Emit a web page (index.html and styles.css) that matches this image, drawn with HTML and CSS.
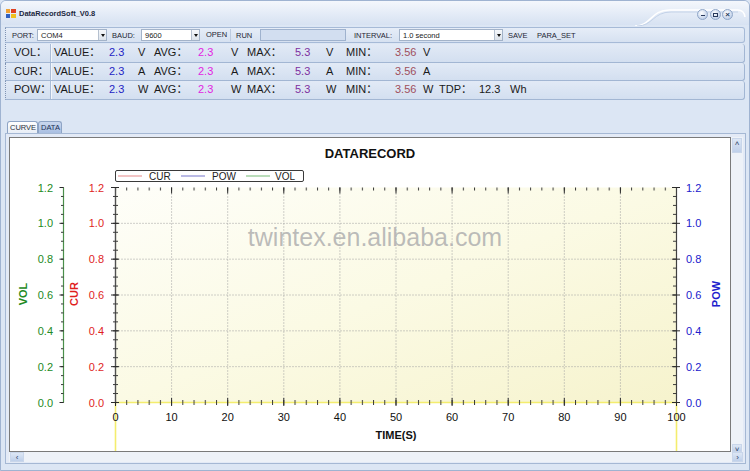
FILE: index.html
```html
<!DOCTYPE html>
<html lang="en">
<head>
  <meta charset="UTF-8">
  <title>DataRecordSoft_V0.8</title>
  <link rel="stylesheet" href="styles.css">
</head>
<body>
  <div class="window">
    <div class="titlebar">
      <svg class="app-icon" width="10" height="9" viewBox="0 0 10 9">
        <rect x="0" y="0" width="4" height="4" fill="#f0a030"/>
        <rect x="5" y="0" width="5" height="4" fill="#e04020"/>
        <rect x="0" y="5" width="4" height="4" fill="#3060c0"/>
        <rect x="5" y="5" width="5" height="4" fill="#f0c020"/>
      </svg>
      <span class="title">DataRecordSoft_V0.8</span>
      <svg class="title-curve" width="120" height="25" viewBox="630 0 120 25">
        <path d="M636 25 C652 25 652 9 670 9 L739 9 Q745 9 746 16" fill="none" stroke="#ffffff" stroke-width="1.5"/>
        <path d="M638 25 C654 25 654 11 672 11 L739 11" fill="none" stroke="#c3d2e8" stroke-width="1"/>
      </svg>
      <div class="controls">
        <span class="ctl"><i class="ico-min"></i></span>
        <span class="ctl"><i class="ico-max"></i></span>
        <span class="ctl"><i class="ico-close">×</i></span>
      </div>
    </div>

    <div class="toolbar">
      <span class="lbl lbl-port">PORT:</span>
      <div class="combo combo-port"><span>COM4</span><i class="arrow"></i></div>
      <span class="lbl lbl-baud">BAUD:</span>
      <div class="combo combo-baud"><span>9600</span><i class="arrow"></i></div>
      <span class="btn btn-open">OPEN</span>
      <span class="btn btn-run">RUN</span>
      <div class="textbox"></div>
      <span class="lbl lbl-interval">INTERVAL:</span>
      <div class="combo combo-interval"><span>1.0 second</span><i class="arrow"></i></div>
      <span class="btn btn-save">SAVE</span>
      <span class="btn">PARA_SET</span>
    </div>

    <div class="rows">
      <div class="row">
        <span class="name">VOL：</span>
        <span class="key first">VALUE：</span><span class="val">2.3</span><span>V</span>
        <span class="key">AVG：</span><span class="avg">2.3</span><span>V</span>
        <span class="key">MAX：</span><span class="max">5.3</span><span>V</span>
        <span class="key">MIN：</span><span class="min">3.56</span><span>V</span>
      </div>
      <div class="row">
        <span class="name">CUR：</span>
        <span class="key first">VALUE：</span><span class="val">2.3</span><span>A</span>
        <span class="key">AVG：</span><span class="avg">2.3</span><span>A</span>
        <span class="key">MAX：</span><span class="max">5.3</span><span>A</span>
        <span class="key">MIN：</span><span class="min">3.56</span><span>A</span>
      </div>
      <div class="row">
        <span class="name">POW：</span>
        <span class="key first">VALUE：</span><span class="val">2.3</span><span>W</span>
        <span class="key">AVG：</span><span class="avg">2.3</span><span>W</span>
        <span class="key">MAX：</span><span class="max">5.3</span><span>W</span>
        <span class="key">MIN：</span><span class="min">3.56</span><span>W</span>
        <span class="key">TDP：</span><span>12.3</span><span>Wh</span>
      </div>
    </div>

    <div class="tabs">
      <span class="tab tab-curve">CURVE</span>
      <span class="tab tab-data active">DATA</span>
    </div>

    <div class="panel">
      <div class="chart-area">
        <svg class="chart" width="722" height="315" viewBox="9 137 722 315">
          <defs>
            <linearGradient id="plotFill" x1="0" y1="0" x2="1" y2="1">
              <stop offset="0" stop-color="#fefef9"/>
              <stop offset="0.5" stop-color="#fbfae4"/>
              <stop offset="1" stop-color="#f6f3cd"/>
            </linearGradient>
            <pattern id="xMinor" x="115" y="0" width="11.22" height="20" patternUnits="userSpaceOnUse">
              <rect width="1" height="20" fill="#3a3a3a"/>
            </pattern>
            <pattern id="yMinor" x="0" y="187" width="20" height="8.958" patternUnits="userSpaceOnUse">
              <rect width="20" height="1" fill="#3a3a3a"/>
            </pattern>
          </defs>

          <rect x="9.5" y="137.5" width="721" height="314" fill="#ffffff" stroke="#7a7a7a"/>
          <text class="c-title" x="370" y="158" text-anchor="middle">DATARECORD</text>

          <!-- legend -->
          <rect x="115.5" y="170.5" width="188" height="11" rx="1.5" fill="#ffffff" stroke="#3a3a3a"/>
          <line x1="118" y1="176" x2="142" y2="176" stroke="#e58a8a" stroke-width="1.2"/>
          <text class="legend" x="149" y="180">CUR</text>
          <line x1="181" y1="176" x2="205" y2="176" stroke="#7777cc" stroke-width="1.2"/>
          <text class="legend" x="212" y="180">POW</text>
          <line x1="246" y1="176" x2="270" y2="176" stroke="#77bb77" stroke-width="1.2"/>
          <text class="legend" x="275" y="180">VOL</text>

          <!-- plot area -->
          <rect x="115.5" y="187.5" width="561" height="215" fill="url(#plotFill)"/>
          <g fill="none" stroke="#a0a0a0" stroke-dasharray="1 2">
            <path d="M171.6 187.5V402.5M227.7 187.5V402.5M283.8 187.5V402.5M339.9 187.5V402.5M396 187.5V402.5M452.1 187.5V402.5M508.2 187.5V402.5M564.3 187.5V402.5M620.4 187.5V402.5"/>
            <path d="M115.5 223.33H676.5M115.5 259.17H676.5M115.5 295H676.5M115.5 330.83H676.5M115.5 366.67H676.5"/>
          </g>

          <text class="watermark" x="375" y="246" text-anchor="middle">twintex.en.alibaba.com</text>

          <!-- x axis -->
          <path d="M115.5 402.5H676.5M115.5 402.5V451M676.5 402.5V451" fill="none" stroke="#f4ed6e" stroke-width="1.6"/>
          <rect x="115" y="400" width="562" height="5" fill="url(#xMinor)"/>
          <rect x="115" y="187.5" width="562" height="3" fill="url(#xMinor)"/>
          <path d="M115.5 398v8M171.6 398v8M227.7 398v8M283.8 398v8M339.9 398v8M396 398v8M452.1 398v8M508.2 398v8M564.3 398v8M620.4 398v8M676.5 398v8" stroke="#2a2a2a"/>
          <path d="M171.6 187.5v6M227.7 187.5v6M283.8 187.5v6M339.9 187.5v6M396 187.5v6M452.1 187.5v6M508.2 187.5v6M564.3 187.5v6M620.4 187.5v6" stroke="#2a2a2a"/>
          <g class="x-lbl" text-anchor="middle">
            <text x="115.5" y="421">0</text>
            <text x="171.6" y="421">10</text>
            <text x="227.7" y="421">20</text>
            <text x="283.8" y="421">30</text>
            <text x="339.9" y="421">40</text>
            <text x="396" y="421">50</text>
            <text x="452.1" y="421">60</text>
            <text x="508.2" y="421">70</text>
            <text x="564.3" y="421">80</text>
            <text x="620.4" y="421">90</text>
            <text x="676.5" y="421">100</text>
          </g>
          <text class="ax-title" x="396" y="439" text-anchor="middle">TIME(S)</text>

          <!-- CUR axis -->
          <line x1="115.5" y1="187.5" x2="115.5" y2="402.5" stroke="#505050" stroke-width="1.4"/>
          <rect x="113" y="187" width="5" height="216" fill="url(#yMinor)"/>
          <path d="M111 187.5h8M111 223.33h8M111 259.17h8M111 295h8M111 330.83h8M111 366.67h8M111 402.5h8" stroke="#2a2a2a"/>
          <g class="y-lbl cur" text-anchor="end">
            <text x="104" y="191.5">1.2</text>
            <text x="104" y="227.3">1.0</text>
            <text x="104" y="263.2">0.8</text>
            <text x="104" y="299">0.6</text>
            <text x="104" y="334.8">0.4</text>
            <text x="104" y="370.7">0.2</text>
            <text x="104" y="406.5">0.0</text>
          </g>
          <text class="ax-title cur" transform="translate(78 294) rotate(-90)" text-anchor="middle">CUR</text>

          <!-- VOL axis -->
          <line x1="63.5" y1="187.5" x2="63.5" y2="402.5" stroke="#4a8f4a" stroke-width="1.2"/>
          <rect x="61" y="187" width="2.5" height="216" fill="url(#yMinor)"/>
          <path d="M59.5 187.5h4M59.5 223.33h4M59.5 259.17h4M59.5 295h4M59.5 330.83h4M59.5 366.67h4M59.5 402.5h4" stroke="#2a2a2a"/>
          <g class="y-lbl vol" text-anchor="end">
            <text x="53" y="191.5">1.2</text>
            <text x="53" y="227.3">1.0</text>
            <text x="53" y="263.2">0.8</text>
            <text x="53" y="299">0.6</text>
            <text x="53" y="334.8">0.4</text>
            <text x="53" y="370.7">0.2</text>
            <text x="53" y="406.5">0.0</text>
          </g>
          <text class="ax-title vol" transform="translate(27 294) rotate(-90)" text-anchor="middle">VOL</text>

          <!-- POW axis -->
          <line x1="676.5" y1="187.5" x2="676.5" y2="402.5" stroke="#404040" stroke-width="1.2"/>
          <rect x="673" y="187" width="4" height="216" fill="url(#yMinor)"/>
          <path d="M672 187.5h8M672 223.33h8M672 259.17h8M672 295h8M672 330.83h8M672 366.67h8M672 402.5h8" stroke="#2a2a2a"/>
          <g class="y-lbl pow">
            <text x="686" y="191.5">1.2</text>
            <text x="686" y="227.3">1.0</text>
            <text x="686" y="263.2">0.8</text>
            <text x="686" y="299">0.6</text>
            <text x="686" y="334.8">0.4</text>
            <text x="686" y="370.7">0.2</text>
            <text x="686" y="406.5">0.0</text>
          </g>
          <text class="ax-title pow" transform="translate(720 294) rotate(-90)" text-anchor="middle">POW</text>
        </svg>
        <div class="vscroll">
          <span class="sbtn up">˄</span>
          <span class="sbtn down">˅</span>
        </div>
      </div>
      <div class="hscroll">
        <span class="sbtn left">‹</span>
        <span class="sbtn right">›</span>
      </div>
    </div>
  </div>
</body>
</html>
```

FILE: styles.css
```css
* {
  box-sizing: border-box;
}

body {
  margin: 0;
  background: #dbe5f4;
  font-family: "Liberation Sans", Arial, "Noto Sans CJK SC", sans-serif;
  color: #1a1a1a;
}

.window {
  width: 750px;
  height: 471px;
  background: #dce6f4;
  border: 1px solid #9fb3d1;
  border-radius: 6px 6px 0 0;
  overflow: hidden;
}

/* title bar */
.titlebar {
  position: relative;
  height: 24px;
  display: flex;
  align-items: center;
  padding-left: 5px;
  background: linear-gradient(#f4f7fc, #e2eaf6 60%, #d7e2f2);
}

.app-icon {
  margin-right: 3px;
}

.title {
  font-size: 7.5px;
  font-weight: bold;
  color: #1b2740;
}

.title-curve {
  position: absolute;
  right: 0;
  top: 0;
}

.controls {
  position: absolute;
  right: 16px;
  top: 8px;
  display: flex;
  gap: 1.5px;
}

.ctl {
  width: 11px;
  height: 11px;
  border-radius: 50%;
  border: 1px solid #8fa6c8;
  background: radial-gradient(circle at 40% 35%, #ffffff, #c4d3ea 70%, #a9bedf);
  display: flex;
  align-items: center;
  justify-content: center;
}

.ico-min {
  width: 4px;
  height: 1.5px;
  margin-top: 2px;
  background: #283a5c;
}

.ico-max {
  width: 5px;
  height: 4px;
  border: 1px solid #283a5c;
  border-top-width: 1.5px;
}

.ico-close {
  font-style: normal;
  font-size: 8px;
  line-height: 8px;
  font-weight: bold;
  color: #283a5c;
}

/* tool bar */
.toolbar {
  margin: 2px 4px 0 4px;
  height: 16px;
  display: flex;
  align-items: center;
  padding-left: 6px;
  font-size: 7.5px;
  background: linear-gradient(#e6edf8, #d6e1f1);
  border: 1px solid #a6bad7;
  border-left: 1px dotted #7f93b3;
  border-radius: 0 3px 3px 0;
}

.lbl,
.btn {
  white-space: nowrap;
  color: #1e2533;
}

.lbl-port {
  width: 25px;
}

.lbl-baud {
  width: 34px;
  padding-left: 5px;
}

.lbl-interval {
  width: 53px;
  padding-left: 8px;
}

.combo {
  height: 12px;
  display: flex;
  align-items: center;
  padding-left: 3px;
  background: #ffffff;
  border: 1px solid #a3b3c9;
}

.combo span {
  flex: 1;
}

.combo-port {
  width: 70px;
}

.combo-baud {
  width: 59px;
}

.combo-interval {
  width: 104px;
}

.arrow {
  width: 8px;
  height: 10px;
  position: relative;
  background: linear-gradient(#f6f8fb, #dde3eb);
  border-left: 1px solid #b5c0cf;
}

.arrow::after {
  content: "";
  position: absolute;
  left: 1.5px;
  top: 4px;
  border-left: 2.5px solid transparent;
  border-right: 2.5px solid transparent;
  border-top: 3px solid #111;
}

.btn {
  padding-left: 6px;
}

.btn-open {
  width: 31px;
  border-right: 1px solid #bccbe0;
  height: 12px;
  line-height: 12px;
}

.btn-run {
  width: 29px;
  padding-left: 5px;
}

.btn-save {
  width: 28px;
  padding-left: 5px;
}

.textbox {
  width: 86px;
  height: 12px;
  background: #d2def0;
  border: 1px solid #9fb2ce;
}

/* value rows */
.rows {
  margin: 1px 4px 0 4px;
}

.row {
  height: 18.7px;
  display: grid;
  grid-template-columns: 36px 59px 29px 16px 44px 33px 16px 48px 31px 20px 49px 28px 16px 40px 31px auto;
  align-items: stretch;
  padding-left: 8px;
  font-size: 11px;
  line-height: 17px;
  white-space: nowrap;
  background: linear-gradient(#e2eaf6, #d3dff0);
  border-bottom: 1px solid #a2b6d3;
  border-right: 1px solid #a2b6d3;
  border-left: 1px dotted #7f93b3;
  border-radius: 0 3px 3px 0;
}

.key.first {
  border-left: 1px solid #aabdd8;
  box-shadow: inset 1px 0 #f3f6fb;
  padding-left: 3px;
}

.val {
  color: #2424c4;
}

.avg {
  color: #e21fe2;
}

.max {
  color: #7e2fa0;
}

.min {
  color: #a04f5c;
}

/* tabs */
.tabs {
  margin: 21px 0 0 6px;
  height: 12px;
  display: flex;
}

.tab {
  height: 12px;
  font-size: 7.5px;
  line-height: 11px;
  padding-left: 2px;
  color: #2a2f3a;
  background: linear-gradient(#ffffff, #e7edf6);
  border: 1px solid #8ea4c5;
  border-bottom: none;
  border-radius: 3px 3px 0 0;
}

.tab-curve {
  width: 31px;
}

.tab-data {
  width: 24px;
}

.tab.active {
  background: linear-gradient(#c9d7ee, #a9bfe2);
  color: #1c2f55;
}

/* chart panel */
.panel {
  margin-left: 4px;
  width: 741px;
  height: 331px;
  padding: 3px 0 0 3px;
  background: #e3eaf6;
  border: 1px solid #a5b8d4;
}

.chart-area {
  display: flex;
}

.chart {
  display: block;
}

.chart text {
  font-family: "Liberation Sans", Arial, sans-serif;
}

.c-title {
  font-size: 13px;
  font-weight: bold;
  fill: #111;
}

.legend {
  font-size: 10px;
  fill: #222;
}

.watermark {
  font-size: 25px;
  fill: #b0b0b0;
  fill-opacity: 0.85;
}

.x-lbl {
  font-size: 11px;
  fill: #111;
}

.y-lbl {
  font-size: 11px;
}

.ax-title {
  font-size: 11px;
  font-weight: bold;
  fill: #111;
}

.cur {
  fill: #e01e1e;
}

.vol {
  fill: #238a23;
}

.pow {
  fill: #2020cc;
}

.vscroll {
  width: 12px;
  height: 315px;
  display: flex;
  flex-direction: column;
  justify-content: space-between;
  padding: 1px 1px 0 1px;
  background: #eef2f8;
}

.hscroll {
  width: 734px;
  height: 10px;
  display: flex;
  justify-content: space-between;
  padding-left: 1px;
  background: #eef2f8;
}

.sbtn {
  font-size: 8px;
  line-height: 9px;
  text-align: center;
  color: #2b3f66;
  background: linear-gradient(#dde7f5, #bfd0ea);
  border: 1px solid #c9d6ea;
}

.up {
  height: 15px;
}

.down {
  height: 8px;
}

.left {
  width: 14px;
}

.right {
  width: 11px;
}
```
